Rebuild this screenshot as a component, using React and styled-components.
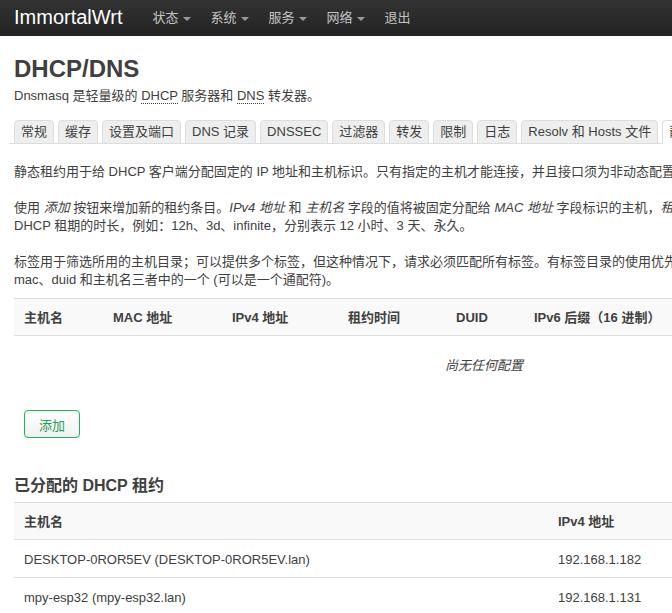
import React from "react";
import styled, { createGlobalStyle } from "styled-components";

const GlobalStyle = createGlobalStyle`
	html, body {
		margin: 0;
		padding: 0;
		overflow: hidden;
		background: #fff;
	}
	body {
		font-family: "Liberation Sans", Arial, "Noto Sans CJK SC", sans-serif;
		font-size: 13px;
		line-height: 18px;
		color: #404040;
	}
	* {
		box-sizing: border-box;
	}
`;

const menu = ["状态", "系统", "服务", "网络"];

const tabs = [
	"常规",
	"缓存",
	"设置及端口",
	"DNS 记录",
	"DNSSEC",
	"过滤器",
	"转发",
	"限制",
	"日志",
	"Resolv 和 Hosts 文件",
];

const staticCols = [
	{ label: "主机名", width: 89 },
	{ label: "MAC 地址", width: 119 },
	{ label: "IPv4 地址", width: 116 },
	{ label: "租约时间", width: 108 },
	{ label: "DUID", width: 78 },
	{ label: "IPv6 后缀（16 进制）", width: 170 },
	{ label: "标签", width: 140 },
	{ label: "", width: 120 },
];

const leases = [
	{ host: "DESKTOP-0ROR5EV (DESKTOP-0ROR5EV.lan)", ip: "192.168.1.182", mac: "3c:7c:3f:1e:52:a8", time: "11h 42m 10s" },
	{ host: "mpy-esp32 (mpy-esp32.lan)", ip: "192.168.1.131", mac: "a4:cf:12:6b:90:3d", time: "10h 05m 31s" },
];

function App() {
	return (
		<>
			<GlobalStyle />
			<Navbar>
				<Brand>ImmortalWrt</Brand>
				<Menu>
					{menu.map((m) => (
						<MenuItem key={m}>
							{m}
							<Caret />
						</MenuItem>
					))}
					<MenuItem>退出</MenuItem>
				</Menu>
			</Navbar>

			<Main>
				<Title>DHCP/DNS</Title>
				<Subtitle>
					Dnsmasq 是轻量级的 <Abbr>DHCP</Abbr> 服务器和 <Abbr>DNS</Abbr> 转发器。
				</Subtitle>

				<Tabs>
					{tabs.map((t) => (
						<Tab key={t}>{t}</Tab>
					))}
					<Tab $active>静态地址分配</Tab>
					<Tab>IP 集</Tab>
				</Tabs>

				<Desc>
					<p>
						静态租约用于给 DHCP 客户端分配固定的 IP 地址和主机标识。只有指定的主机才能连接，并且接口须为非动态配置。
					</p>
					<p>
						使用 <em>添加</em> 按钮来增加新的租约条目。<em>IPv4 地址</em> 和 <em>主机名</em> 字段的值将被固定分配给 <em>MAC 地址</em> 字段标识的主机，<em>租期</em> 是一个可选字段，可为每个主机设置非标准的
						<br />
						DHCP 租期的时长，例如：12h、3d、infinite，分别表示 12 小时、3 天、永久。
					</p>
					<p>
						标签用于筛选所用的主机目录；可以提供多个标签，但这种情况下，请求必须匹配所有标签。有标签目录的使用优先于无标签目录，主机目录须匹配
						<br />
						mac、duid 和主机名三者中的一个 (可以是一个通配符)。
					</p>
				</Desc>

				<Table $width={940} $gap={9}>
					<thead>
						<tr>
							{staticCols.map((c, i) => (
								<Th key={i} $width={c.width}>
									{c.label}
								</Th>
							))}
						</tr>
					</thead>
					<tbody>
						<tr>
							<Empty colSpan={staticCols.length}>尚无任何配置</Empty>
						</tr>
					</tbody>
				</Table>

				<Actions>
					<AddButton>添加</AddButton>
				</Actions>

				<SectionTitle>已分配的 DHCP 租约</SectionTitle>
				<Table $width={940} $gap={3}>
					<thead>
						<tr>
							<Th $width={534}>主机名</Th>
							<Th $width={150}>IPv4 地址</Th>
							<Th $width={150}>MAC 地址</Th>
							<Th>剩余租期</Th>
						</tr>
					</thead>
					<tbody>
						{leases.map((l) => (
							<tr key={l.ip}>
								<Td>{l.host}</Td>
								<Td>{l.ip}</Td>
								<Td>{l.mac}</Td>
								<Td>{l.time}</Td>
							</tr>
						))}
					</tbody>
				</Table>
			</Main>
		</>
	);
}

const Navbar = styled.div`
	display: flex;
	align-items: center;
	height: 36px;
	width: 100%;
	padding-left: 14px;
	background-image: linear-gradient(to bottom, #333333, #222222);
`;

const Brand = styled.a`
	font-size: 20px;
	line-height: 36px;
	color: #ffffff;
	padding-right: 20px;
	margin-top: -2px;
`;

const Menu = styled.ul`
	display: flex;
	margin: 0;
	padding: 0;
	list-style: none;
`;

const MenuItem = styled.li`
	display: flex;
	align-items: center;
	padding: 0 10px;
	line-height: 36px;
	font-size: 13px;
	color: #c4c4c4;
`;

const Caret = styled.span`
	display: inline-block;
	width: 0;
	height: 0;
	margin-left: 4px;
	margin-top: 1px;
	border-left: 4px solid transparent;
	border-right: 4px solid transparent;
	border-top: 4px solid #9a9a9a;
`;

const Main = styled.div`
	width: 954px;
	padding: 0 0 0 14px;
`;

const Title = styled.h2`
	margin: 15px 0 0;
	font-size: 24px;
	line-height: 36px;
	font-weight: bold;
	color: #404040;
`;

const Subtitle = styled.div`
	margin-top: 0;
	line-height: 18px;
`;

const Abbr = styled.abbr`
	text-decoration: none;
	border-bottom: 1px dotted #404040;
`;

const Tabs = styled.ul`
	display: flex;
	margin: 15px 0 0 -5px;
	padding: 0 0 0 5px;
	list-style: none;
	border-bottom: 1px solid #dddddd;
	white-space: nowrap;
`;

const Tab = styled.li`
	flex-shrink: 0;
	margin-right: 4px;
	margin-bottom: -1px;
	padding: 2px 6px;
	line-height: 18px;
	border: 1px solid #dddddd;
	border-bottom-color: ${(p) => (p.$active ? "#ffffff" : "#dddddd")};
	border-radius: 4px 4px 0 0;
	background: ${(p) => (p.$active ? "#ffffff" : "#eeeeee")};
	color: #404040;
`;

const Desc = styled.div`
	padding-top: 19px;
	white-space: nowrap;
	p {
		margin: 0 0 18px;
	}
	p:last-child {
		margin-bottom: 0;
	}
	em {
		font-style: italic;
	}
`;

const Table = styled.table`
	width: ${(p) => p.$width}px;
	margin-top: ${(p) => p.$gap}px;
	border-collapse: collapse;
	table-layout: fixed;
	white-space: nowrap;
`;

const Th = styled.th`
	width: ${(p) => (p.$width ? `${p.$width}px` : "auto")};
	padding: 10px 10px 8px;
	text-align: left;
	font-weight: bold;
	line-height: 18px;
	background: #f9f9f9;
	border-top: 1px solid #dddddd;
	border-bottom: 1px solid #dddddd;
	overflow: hidden;
`;

const Td = styled.td`
	padding: 11px 10px 8px;
	line-height: 18px;
	border-bottom: 1px solid #dddddd;
`;

const Empty = styled.td`
	padding: 21px 10px 19px;
	text-align: center;
	font-style: italic;
	line-height: 18px;
`;

const Actions = styled.div`
	padding: 16px 0 0 10px;
`;

const AddButton = styled.button`
	width: 56px;
	height: 28px;
	padding: 0;
	font-family: inherit;
	font-size: 13px;
	color: #1a9f56;
	background: linear-gradient(to bottom, #ffffff, #f1f1f1);
	border: 1px solid #1fb35e;
	border-radius: 4px;
`;

const SectionTitle = styled.h3`
	margin: 34px 0 0;
	font-size: 16px;
	line-height: 27px;
	font-weight: bold;
	color: #404040;
`;

export default App;
